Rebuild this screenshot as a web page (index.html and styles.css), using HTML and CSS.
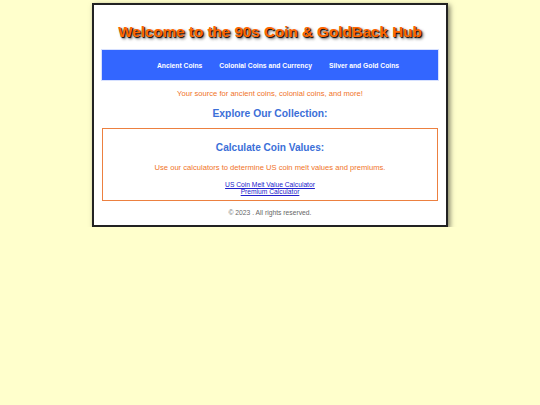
FILE: index.html
```html
<!DOCTYPE html>
<html lang="en">
<head>
<meta charset="utf-8">
<title>90s Coin &amp; GoldBack Hub</title>
<link rel="stylesheet" href="styles.css">
</head>
<body>
<div class="container">
  <h1 class="title">Welcome to the 90s Coin &amp; GoldBack Hub</h1>
  <nav class="nav">
    <a href="#">Ancient Coins</a>
    <a href="#">Colonial Coins and Currency</a>
    <a href="#">Silver and Gold Coins</a>
  </nav>
  <p class="tagline">Your source for ancient coins, colonial coins, and more!</p>
  <h2 class="explore">Explore Our Collection:</h2>
  <section class="calc">
    <h2 class="calc-title">Calculate Coin Values:</h2>
    <p class="calc-text">Use our calculators to determine US coin melt values and premiums.</p>
    <div class="calc-links">
      <a href="#">US Coin Melt Value Calculator</a><br>
      <a href="#">Premium Calculator</a>
    </div>
  </section>
  <footer class="footer">© 2023 . All rights reserved.</footer>
</div>
</body>
</html>
```
FILE: styles.css
```css
html, body {
  margin: 0;
  padding: 0;
}
body {
  background: #ffffcc;
  font-family: "Liberation Sans", Arial, sans-serif;
  padding-top: 3px;
}
.container {
  box-sizing: border-box;
  width: 356px;
  margin: 0 auto;
  background: #ffffff;
  border: 2px solid #222222;
  box-shadow: 2px 2px 5px rgba(0, 0, 0, 0.5);
  padding: 8px;
  text-align: center;
}
.title {
  margin: 10px 0 9px;
  font-size: 15.2px;
  line-height: 18px;
  font-weight: bold;
  color: #ff6600;
  text-shadow: 1px 1px 1px #000000, 2px 2px 3px rgba(0, 0, 0, 0.6);
}
.nav {
  display: flex;
  justify-content: center;
  gap: 17px;
  height: 30px;
  align-items: center;
  padding-left: 16px;
  background: #3366ff;
  box-shadow: 0 0 0 1px #d6e0ff;
}
.nav a {
  color: #ffffff;
  font-size: 6.75px;
  font-weight: bold;
  text-decoration: none;
}
.tagline {
  margin: 9px 0 0;
  font-size: 7.6px;
  line-height: 10px;
  color: #f07328;
}
.explore {
  margin: 8px 0 0;
  font-size: 10.3px;
  line-height: 13px;
  color: #3b6fd8;
}
.calc {
  margin-top: 8px;
  border: 1px solid #ec8040;
  padding: 12px 0 5px;
}
.calc-title {
  margin: 0;
  font-size: 10.1px;
  line-height: 13px;
  color: #3b6fd8;
}
.calc-text {
  margin: 9px 0 0;
  font-size: 7.6px;
  line-height: 10px;
  color: #f07328;
}
.calc-links {
  margin-top: 8px;
  font-size: 6.7px;
  line-height: 7px;
}
.calc-links a {
  color: #2020cc;
}
.footer {
  margin-top: 8px;
  font-size: 6.75px;
  line-height: 8px;
  color: #666666;
}
```
